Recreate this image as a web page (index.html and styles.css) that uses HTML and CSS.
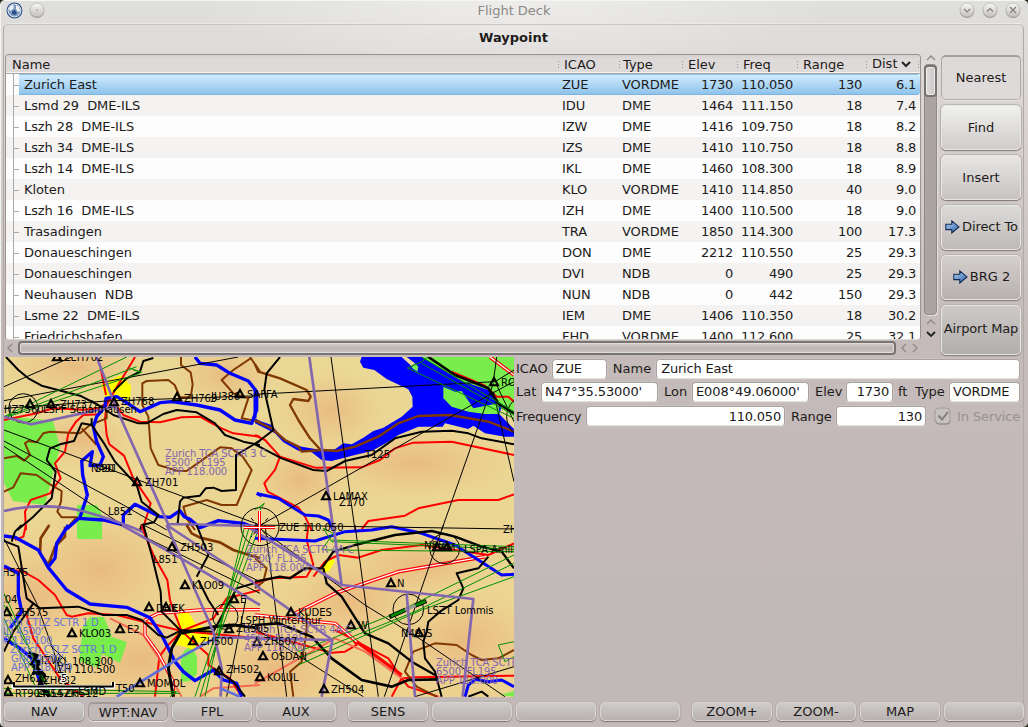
FILE: index.html
```html
<!DOCTYPE html>
<html lang="en">
<head>
<meta charset="utf-8">
<title>Flight Deck</title>
<link rel="stylesheet" href="styles.css">
</head>
<body>
<div class="window">
  <header class="titlebar">
    <div class="tb-left">
      <svg width="17" height="17" viewBox="0 0 17 17"><circle cx="8.500" cy="8.500" r="7.400" fill="#7f9ac0" stroke="#34578c" stroke-width="1.200"/><circle cx="8.500" cy="8.500" r="6.400" fill="none" stroke="#dbe5ef" stroke-width="1"/><path d="M3 6l3-3 2 1-1 3-3 2zM10 3l3 2 1 4-2 1-2-3z" fill="#eef3f4"/><path d="M6 9l3-1 2 3-2 2-3-1z" fill="#28518b"/></svg>
      <svg width="16" height="17" viewBox="0 0 16 17"><use href="#round"/><circle cx="8" cy="8" r=".8" fill="#888"/></svg>
    </div>
    <span class="tb-title">Flight Deck</span>
    <div class="tb-right">
      <svg width="16" height="17" viewBox="0 0 16 17"><defs><linearGradient id="rg" x2="0" y2="1"><stop stop-color="#f8f8f7"/><stop offset="1" stop-color="#c3c0be"/></linearGradient><g id="round"><circle cx="8" cy="8.800" r="7.200" fill="#9b9896"/><circle cx="8" cy="8" r="7" fill="url(#rg)" stroke="#b3b0ae" stroke-width=".7"/></g></defs><use href="#round"/><path d="M5 7l3 3 3-3" class="gl"/></svg>
      <svg width="16" height="17" viewBox="0 0 16 17"><use href="#round"/><path d="M5 9.500l3-3 3 3" class="gl"/></svg>
      <svg width="16" height="17" viewBox="0 0 16 17"><use href="#round"/><path d="M5 5l6 6M11 5l-6 6" class="gl"/></svg>
    </div>
  </header>
  <main class="frame">
    <h1>Waypoint</h1>
    <section class="upper">
      <div class="list">
        <div class="toprow">
          <div class="table">
            <div class="row head"><span>Name</span><span>ICAO</span><span>Type</span><span>Elev</span><span>Freq</span><span>Range</span><span>Dist<svg width="10" height="7" viewBox="0 0 10 7"><path d="M1 1l4 4 4-4" fill="none" stroke="#222" stroke-width="2"/></svg></span></div>
            <div class="rows">
            <div class="row sel"><span>Zurich East</span><span>ZUE</span><span>VORDME</span><span>1730</span><span>110.050</span><span>130</span><span>6.1</span></div>
            <div class="row"><span>Lsmd 29&nbsp; DME-ILS</span><span>IDU</span><span>DME</span><span>1464</span><span>111.150</span><span>18</span><span>7.4</span></div>
            <div class="row"><span>Lszh 28&nbsp; DME-ILS</span><span>IZW</span><span>DME</span><span>1416</span><span>109.750</span><span>18</span><span>8.2</span></div>
            <div class="row"><span>Lszh 34&nbsp; DME-ILS</span><span>IZS</span><span>DME</span><span>1410</span><span>110.750</span><span>18</span><span>8.8</span></div>
            <div class="row"><span>Lszh 14&nbsp; DME-ILS</span><span>IKL</span><span>DME</span><span>1460</span><span>108.300</span><span>18</span><span>8.9</span></div>
            <div class="row"><span>Kloten</span><span>KLO</span><span>VORDME</span><span>1410</span><span>114.850</span><span>40</span><span>9.0</span></div>
            <div class="row"><span>Lszh 16&nbsp; DME-ILS</span><span>IZH</span><span>DME</span><span>1400</span><span>110.500</span><span>18</span><span>9.0</span></div>
            <div class="row"><span>Trasadingen</span><span>TRA</span><span>VORDME</span><span>1850</span><span>114.300</span><span>100</span><span>17.3</span></div>
            <div class="row"><span>Donaueschingen</span><span>DON</span><span>DME</span><span>2212</span><span>110.550</span><span>25</span><span>29.3</span></div>
            <div class="row"><span>Donaueschingen</span><span>DVI</span><span>NDB</span><span>0</span><span>490</span><span>25</span><span>29.3</span></div>
            <div class="row"><span>Neuhausen&nbsp; NDB</span><span>NUN</span><span>NDB</span><span>0</span><span>442</span><span>150</span><span>29.3</span></div>
            <div class="row"><span>Lsme 22&nbsp; DME-ILS</span><span>IEM</span><span>DME</span><span>1406</span><span>110.350</span><span>18</span><span>30.2</span></div>
            <div class="row"><span>Friedrichshafen</span><span>FHD</span><span>VORDME</span><span>1400</span><span>112.600</span><span>25</span><span>32.1</span></div>
            </div>
          </div>
          <div class="vscroll">
            <svg width="10" height="7" viewBox="0 0 10 7"><path d="M1 6l4-4 4 4" class="sa"/></svg>
            <div class="vtrack"><div class="vthumb"></div></div>
            <svg width="10" height="7" viewBox="0 0 10 7"><path d="M1 6l4-4 4 4" class="sa"/></svg>
            <svg width="10" height="7" viewBox="0 0 10 7"><path d="M1 1l4 4 4-4" class="sa dark"/></svg>
          </div>
        </div>
        <div class="hscroll">
          <svg width="7" height="10" viewBox="0 0 7 10"><path d="M6 1l-4 4 4 4" class="sa"/></svg>
          <div class="hthumb"></div>
          <svg width="7" height="10" viewBox="0 0 7 10"><path d="M6 1l-4 4 4 4" class="sa"/></svg>
          <svg width="7" height="10" viewBox="0 0 7 10"><path d="M1 1l4 4-4 4" class="sa"/></svg>
        </div>
      </div>
      <nav class="side">
        <button class="btn down">Nearest</button>
        <button class="btn">Find</button>
        <button class="btn s3">Insert</button>
        <button class="btn s4"><svg width="15" height="14" viewBox="0 0 15 14"><defs><linearGradient id="ar" y2="1"><stop stop-color="#b7d2f4"/><stop offset="1" stop-color="#285ea6"/></linearGradient><path id="arrow" d="M.8 4.300h6V.9L14 6.900 6.800 13V9.600h-6z" fill="url(#ar)" stroke="#142c55" stroke-width="1.100"/></defs><use href="#arrow"/></svg><span class="w1">Direct To</span></button>
        <button class="btn s5"><svg width="15" height="14" viewBox="0 0 15 14"><use href="#arrow"/></svg><span>BRG 2</span></button>
        <button class="btn s6">Airport Map</button>
      </nav>
    </section>
    <section class="lower">
      <svg class="map" width="510" height="340" viewBox="4 357 510 340">
        <defs>
          <radialGradient id="hill"><stop stop-color="#e8ac76" stop-opacity=".65"/><stop offset=".5" stop-color="#e9b880" stop-opacity=".38"/><stop offset="1" stop-color="#ebca8a" stop-opacity="0"/></radialGradient>
          <linearGradient id="land" x2="0" y2="1"><stop stop-color="#ead896"/><stop offset="1" stop-color="#edd28f"/></linearGradient>
          <path id="tri" d="M0-4L4 3.200H-4z" fill="none" stroke="#000" stroke-width="2.100"/>
        </defs>
        <rect x="4" y="357" width="510" height="340" fill="url(#land)"/>
        <g fill="url(#hill)">
          <ellipse cx="75" cy="367" rx="80" ry="34"/><ellipse cx="225" cy="375" rx="60" ry="35"/><ellipse cx="330" cy="410" rx="60" ry="42"/><ellipse cx="415" cy="463" rx="105" ry="38"/><ellipse cx="300" cy="480" rx="50" ry="38"/><ellipse cx="100" cy="570" rx="85" ry="65"/><ellipse cx="465" cy="640" rx="80" ry="50"/><ellipse cx="275" cy="670" rx="75" ry="55"/><ellipse cx="30" cy="600" rx="65" ry="60"/><ellipse cx="350" cy="600" rx="75" ry="45"/><ellipse cx="140" cy="660" rx="80" ry="50"/><ellipse cx="80" cy="440" rx="60" ry="30"/><ellipse cx="420" cy="565" rx="80" ry="35"/>
        </g>
        <!-- forests, towns and the lake -->
        <g stroke="none">
          <path d="M4 421l13-4 36 4 7 26-15 58-32-4-9-18zM77 505h20l5 10v24H77z" fill="#78ed4c"/>
          <path d="M83 626l7-9h14l8 20 15 5-7 21-18-9-3 14-20-7z" fill="#78ed4c"/><path d="M181 657q8-18 16 0v17q-6 10-16 7z" fill="#78ed4c"/>
          <g transform="translate(255 355) scale(.33333)">
            <path d="M500 6H777V185L740 160 690 120z" fill="#78ed4c"/>
            <path d="M320 6L315 20 325 38 358 45 395 72 460 103 472 125 473 155 440 185 385 218 355 228 325 248 290 268 265 265 240 283 200 285 140 275 100 262 75 240 50 210 15 198 0 190V205L60 235 85 262 130 287 170 292 200 315 230 318 300 300 350 288 400 260 430 240 490 215H563L570 205 640 222 655 212 690 235 750 245H777V222L750 195 733 177 740 155 700 105 620 78 500 6H455L480 25 470 34 440 6z" fill="#00f"/>
            <path d="M565 95L600 110 620 108 655 160 730 145 733 177 690 177 640 170 590 155 565 130zM470 38L480 25 490 35 487 50z" fill="#78ed4c"/>
          </g>
          <path d="M101 384l20-9 10 11-1 14-23 2zM179 612l8-2 8 13 14 7v10l-12 3-3 7-12-4-8-2zM322 566l8-8 5 3-6 10-7 2z" fill="#ff0"/>
        </g>
        <g fill="none" stroke-linejoin="round">
          <!-- upper left -->
          <g transform="translate(0 355) scale(.33333)">
            <g stroke="#ff0000" stroke-width="6">
              <path d="M405 6L385 40 345 105 320 150 315 190 320 240 328 268 372 302 400 370 452 445 432 510 425 530M302 40L318 120"/><path d="M12 195L110 175 160 160 250 164 300 160 330 130 370 180 420 200 480 202 545 187 600 185 630 202 665 220 700 235 780 245"/>
              <path d="M300 178L250 180 228 200 205 235 195 290 165 325 182 370 150 415 92 435 75 470 78 525"/>
            </g>
            <g stroke="#803800" stroke-width="6">
              <path d="M543 6V30L572 52 578 88 572 127 540 127 524 90 505 75 440 78 427 85V150L445 185 452 280 475 330 530 347 560 348 600 320 660 277 695 280 728 305 755 345 710 450 665 450 620 435 550 455 560 490 585 525"/>
              <path d="M755 8L700 45 665 75 700 115 745 130 725 190 780 200M750 6L780 50M12 310L50 303 72 317 90 300 75 265 85 258 110 262 130 235 150 230 240 235 270 210 320 190V165"/><path d="M12 410L40 397 62 355 110 360 150 388 185 408 183 440 172 470 185 487 230 487 195 525M290 270L245 220"/>
            </g>
            <g stroke="#0000ff" stroke-width="10">
              <path d="M585 6L600 25 650 30 690 55 745 78 770 110V165L755 205 705 195 660 165 590 150 515 140 480 143 420 170 375 140 350 125 318 130 315 155 290 185 280 215 290 260 310 305 300 330 270 332 277 290 245 318 248 360 262 420 240 487 200 522"/>
              <path d="M235 490L310 495 370 510V480L405 448 480 485 510 487 540 467 553 485 570 493 600 518 655 497 730 505 780 525M770 415L785 422"/>
            </g>
            <g stroke="#000" stroke-width="6">
              <path d="M18 6L55 45 85 70 125 92 240 122 295 150 340 180 415 205H440L490 177 530 165 590 172 645 205 675 240 730 260 780 270"/>
              <path d="M460 9L430 18 420 50 380 70 340 110M275 190V210L310 262 345 320 410 390 425 440 475 480 462 502 425 510 420 525M275 210L245 205 222 258 180 268 150 280 140 315 167 350 155 430 100 485 52 525M780 257L708 300V405L665 408 640 398 617 400 600 422 550 428 540 440 533 505"/>
            </g>
            <g stroke="#000" stroke-width="3"><path d="M12 95L215 6M12 137L715 6M12 160L320 138 780 122M12 225L415 375 780 510M12 258L370 450 500 525M12 274L390 525"/><circle cx="70" cy="160" r="44"/></g>
            <g stroke="#008f00" stroke-width="3"><path d="M12 185L380 6M12 187L410 35M12 189L420 55M385 38L425 52 400 45"/></g>
            <g stroke="#8366b0" stroke-width="8"><path d="M290 6L345 150 510 520M12 185L92 208 350 153M12 468Q150 435 290 480T440 540M500 507L780 513"/></g>
          </g>
          <!-- upper right -->
          <g transform="translate(255 355) scale(.33333)">
            <g stroke="#ff0000" stroke-width="6"><path d="M0 240L30 255 75 305 60 345 28 385 38 410 130 458 150 485 170 525M75 305L180 338 320 337 375 315 420 280 475 263 590 260 777 300M320 522L340 498 450 482 490 460 610 435 730 435 777 418"/><path d="M590 50L690 92 725 125H760L777 140"/><path d="M705 6L777 60" stroke-width="11"/><path d="M705 6L777 60" stroke="#fff" stroke-width="4"/></g>
            <g stroke="#803800" stroke-width="7"><path d="M0 28L10 50 75 70 155 105 167 125 160 138 115 132 105 150 130 195 165 250 195 283M0 197L50 220 90 255 130 275 140 290 200 285 245 288 300 275 370 245 430 205 490 183 585 180 700 200 777 230"/></g>
            <path d="M10 417L70 430 110 455 150 480 190 483 220 495 235 525M0 100V190" stroke="#00f" stroke-width="9"/>
            <g stroke="#000" stroke-width="6"><path d="M75 6L35 55 28 105 55 225 0 268 80 310 175 345 215 348 270 318 350 300 420 250 500 230 590 227 640 235 680 250 777 268"/><path d="M520 6L600 60 700 100 730 145 777 175" stroke-width="8"/></g>
            <g stroke="#000" stroke-width="3"><path d="M0 118L720 80 777 45M0 520L720 110 777 80M715 85L560 525M725 90L777 200M715 110L777 380M228 6L300 525M725 6L715 80"/><circle cx="820" cy="185" r="65"/><circle cx="15" cy="515" r="57"/></g>
            <g stroke="#008f00" stroke-width="3"><path d="M500 6L777 170M500 25L777 180M455 38L777 190M460 38L500 20 520 6M0 465L28 445 15 465"/></g>
            <path d="M163 6L235 525" stroke="#8366b0" stroke-width="8"/>
          </g>
          <!-- lower left -->
          <g transform="translate(0 525) scale(.33333)">
            <g stroke="#ff0000" stroke-width="6"><path d="M78 0L70 35 45 45M12 130L70 140 115 165 165 210 200 270 215 275 265 265 350 270 410 285 470 300 545 318M425 0L435 30 460 90 502 165 510 225 520 255 545 318 640 280 680 220 780 195M80 270L100 340 140 400 180 460 250 515M545 318L500 365 478 395 465 515"/><path d="M330 280L430 330 490 420 545 515M600 515L640 490 780 480" stroke="#f36b55"/><path d="M535 310L625 390V420L690 460 725 515"/><path d="M780 254L600 255 475 265 435 285V330L475 385 520 470V515" stroke-width="10"/><path d="M780 254L600 255 475 265 435 285V330L475 385 520 470V515" stroke="#fff" stroke-width="4"/><path d="M545 318L780 340"/></g>
            <g stroke="#803800" stroke-width="8"><path d="M195 5L195 35 165 65 145 120M148 0L122 40 120 85 145 120M560 0L575 25 600 38 660 52 700 75 780 100"/></g>
            <g stroke="#0000ff" stroke-width="10"><path d="M12 33L45 37 115 75 145 128 200 195 270 237 380 247 450 278 485 330 525 410 550 440 585 467 640 435 670 465 710 475 725 515M205 0L170 55 165 100 145 125M12 123L55 145V210L65 260 30 310M12 340L60 370 95 400 120 470 150 515"/></g>
            <g stroke="#000" stroke-width="6"><path d="M12 48L55 65 80 220 120 250 235 245 310 270H380L425 285 475 330 500 338 540 318M65 0L45 20 35 50M430 0L455 90 482 200 485 260 540 315 640 320 670 265 710 190 780 170"/><path d="M100 235L40 320 12 380M595 165L625 225 655 270M590 155L625 90 590 0M640 430L700 470 735 515"/><path d="M545 318L515 370 505 430 520 515M545 325L640 305 700 300 780 310" stroke-width="9"/><path d="M85 385L115 410 105 440M85 385L115 395M100 420L130 450 120 480 150 515" stroke-width="14"/></g>
            <g stroke="#000" stroke-width="3"><path d="M12 40L110 235 200 490M360 0L780 205M430 0L780 170M740 210L680 515M150 360L200 410"/><circle cx="676" cy="275" r="38"/></g>
            <g stroke="#008f00" stroke-width="3"><path d="M12 205L155 515M12 280L120 515M12 320L140 480M12 490L530 500 510 515M12 505H540M12 240L80 360M765 0L640 350 585 515M780 0L645 365 600 515M750 0L670 260 615 515M735 0L640 400"/></g>
            <g stroke="#8366b0" stroke-width="8"><path d="M365 0L560 110 780 240M500 0L640 320 665 430 662 515M500 0L780 185M645 338H780"/><path d="M350 515L545 395 645 340M660 490L720 515" stroke="#6070d8"/></g>
          </g>
          <!-- lower right -->
          <g transform="translate(255 525) scale(.33333)">
            <g stroke="#ff0000" stroke-width="6"><path d="M160 0L155 45 175 120 155 155 50 160 0 175M175 155L210 110 250 90 310 98 380 75 500 60 600 75 700 90 777 55M0 320L110 350 230 383 270 380 305 360 290 340 240 315M305 350L400 400 440 460 460 485 550 515M445 460L480 457 777 452M440 460L410 515"/><path d="M0 475L240 340 330 380 440 460" stroke="#f36b55"/><path d="M120 265L240 205 430 140 690 95" stroke-width="11"/><path d="M120 265L240 205 430 140 690 95" stroke="#fff" stroke-width="4"/><path d="M0 270L240 295 305 350 440 450" stroke-width="10"/><path d="M0 270L240 295 305 350" stroke="#fff" stroke-width="4"/></g>
            <g stroke="#803800" stroke-width="6"><path d="M155 265L155 320 140 410 105 440 115 515M545 515L485 485 450 440 475 380 540 355 605 360 650 390 680 405 730 400 777 375M0 100L35 130 25 170 0 190"/></g>
            <path d="M0 40L180 48 270 20 350 15 410 5 500 25 600 60 740 150 777 148" stroke="#00f" stroke-width="9"/><path d="M630 515L640 480 660 463 700 470 740 465 777 485" stroke="#00f" stroke-width="9"/><path d="M735 510L777 498V515z" fill="#78ed4c"/>
            <g stroke="#000" stroke-width="7"><path d="M0 170L75 155 105 160 150 130H200L235 80 300 60 420 30 530 18 600 35 680 65 740 80 777 130M205 130L215 175 260 215 330 325 400 355 470 410 540 450"/><path d="M0 300L70 295 170 335 230 400 320 465 410 485 460 465 550 463" stroke-width="8"/><path d="M515 320L505 350 510 400 540 440 560 515M515 320L520 290 555 260 610 225 625 190 605 145 670 130 700 95M640 515L680 500 700 515" stroke-width="6"/></g>
            <g stroke="#000" stroke-width="3"><path d="M0 0L777 12M30 0L95 515M300 0L370 515M565 0L388 515M0 0L330 240 500 345 750 515M0 310L325 515M480 515L777 425"/><circle cx="460" cy="253" r="46"/><circle cx="569" cy="71" r="45"/></g>
            <g stroke="#008f00" stroke-width="3"><path d="M205 10L230 50 777 73M230 45L777 65M210 75L777 80M205 10L235 25 200 75M130 380L410 270 777 90M130 400L480 260 777 115M130 420L500 255 777 155M130 380L110 350M777 350L730 360 750 410 777 395"/><path d="M403 276L452 254M480 242L514 228" stroke="#000" stroke-width="13"/><path d="M408 274L450 255M483 241L511 229" stroke="#008f00" stroke-width="8"/><path d="M450 255L482 241" stroke="#999" stroke-width="9"/></g>
            <g stroke="#8366b0" stroke-width="8"><path d="M235 0L260 180 655 222 623 515M455 205L480 515M0 180L232 345 200 515M0 340L232 345M-30 0L260 180"/></g>
          </g>
          <path d="M251 518l17 19M268 518l-17 19M250 527h19" stroke="#000" stroke-dasharray="4 2"/><path d="M259.500 511v31M244 527.500h31" stroke="#f00" stroke-width="3"/><path d="M259.500 511v31M244 527.500h31" stroke="#fff"/>
          <path d="M13 682v5h100v-5" stroke="#fff" stroke-width="4"/><path d="M14 682v4.500h99v-4.500" stroke="#000" stroke-width="2"/>
        </g>
        <g>
          <use href="#tri" x="57" y="357"/><use href="#tri" x="30" y="404"/><use href="#tri" x="51" y="404"/><use href="#tri" x="114" y="402"/><use href="#tri" x="177" y="397"/><use href="#tri" x="240" y="394"/><use href="#tri" x="137" y="482"/><use href="#tri" x="494" y="382"/><use href="#tri" x="326" y="496"/><use href="#tri" x="172" y="547"/><use href="#tri" x="185" y="585"/><use href="#tri" x="149" y="607"/><use href="#tri" x="166" y="607"/><use href="#tri" x="72" y="633"/><use href="#tri" x="120" y="629"/><use href="#tri" x="193" y="641"/><use href="#tri" x="229" y="629"/><use href="#tri" x="234" y="599"/><use href="#tri" x="291" y="612"/><use href="#tri" x="351" y="625"/><use href="#tri" x="391" y="583"/><use href="#tri" x="263" y="656"/><use href="#tri" x="260" y="677"/><use href="#tri" x="324" y="689"/><use href="#tri" x="140" y="683"/><use href="#tri" x="219" y="671"/><use href="#tri" x="257" y="642"/><use href="#tri" x="419" y="633"/><use href="#tri" x="437" y="547"/><use href="#tri" x="447" y="547"/><use href="#tri" x="7" y="612"/><use href="#tri" x="8" y="692"/><use href="#tri" x="35" y="661"/><use href="#tri" x="8" y="680"/><use href="#tri" x="37" y="670"/>
        </g>
        <g class="lbl air">
          <text x="165" y="457">Zurich TCA SCTR 3 C</text><text x="165" y="466">5500' FL195</text><text x="165" y="475">APP 118.000</text>
          <text x="246" y="553">Zurich TCA SCTR 4A C</text><text x="246" y="562">4500' FL195</text><text x="246" y="571">APP 118.000</text>
          <text x="244" y="633">Zurich TCA SCTR 4A C</text><text x="244" y="642">4500' FL195</text><text x="244" y="651">APP 118.000</text>
          <text x="436" y="666">Zurich TCA SCTR 5</text><text x="436" y="675">6500' FL195</text><text x="436" y="684">APP 118.000</text>
        </g>
        <g class="lbl">
          <text x="57" y="361">ZZEH702</text><text x="60" y="408">ZH737</text><text x="4" y="413">HZ7360</text><text x="43" y="413">LSPF Schaffhausen</text><text x="121" y="405">ZH768</text><text x="184" y="402">ZH769</text><text x="211" y="400">JU386</text><text x="247" y="398">SAFFA</text><text x="91" y="472">N491</text><text x="95" y="472">S90</text><text x="145" y="486">ZH701</text><text x="108" y="515">L851</text><text x="501" y="386">ROM</text><text x="365" y="458">T125</text><text x="333" y="500">LAMAX</text><text x="339" y="506">Z170</text><text x="279" y="531">ZUE 110.050</text><text x="503" y="533">ZH</text><text x="180" y="551">ZH503</text><text x="153" y="563">L851</text><text x="192" y="589">KLO09</text><text x="156" y="612">DHK</text><text x="172" y="612">EK</text><text x="2" y="576">H575</text><text x="-2" y="603">Z04</text><text x="15" y="616">ZH575</text><text x="79" y="637">KLO03</text><text x="127" y="633">E2</text><text x="200" y="645">ZH500</text><text x="240" y="603">E</text><text x="240" y="624">LSPH Winterthur</text><text x="236" y="632">ZH505</text><text x="298" y="616">KUDES</text><text x="358" y="629">W</text><text x="397" y="587">N</text><text x="427" y="614">LSZT Lommis</text><text x="401" y="637">N491</text><text x="426" y="637">S</text><text x="271" y="660">OSDAN</text><text x="264" y="645">ZH507</text><text x="267" y="681">KOLUL</text><text x="331" y="693">ZH504</text><text x="226" y="673">ZH502</text><text x="147" y="687">MOMOL</text><text x="424" y="549">N851</text><text x="440" y="551">AM</text><text x="464" y="553">LSPA Amlikon</text><text x="41" y="664">IZW</text><text x="54" y="665">IKL 108.300</text><text x="54" y="673">IZH 110.500</text><text x="15" y="682">ZH621</text><text x="43" y="684">ZH632</text><text x="15" y="697">RT904</text><text x="36" y="697">ZH547</text><text x="52" y="697">LSZK</text><text x="65" y="697">ZH512</text><text x="78" y="695">LSMD</text><text x="116" y="692">T50</text><text x="61" y="682" class="scale">5</text>
        </g>
        <g class="lbl ctlz"><text x="-8" y="626">Zurich CTLZ SCTR 1 D</text><text x="-9" y="635">GND 4500'</text><text x="-9" y="644">APP 118.100</text><text x="10" y="653">Zurich CTLZ SCTR 1 D</text><text x="11" y="662">GND 4500'</text><text x="11" y="671">APP 118.100</text></g>
      </svg>
      <form class="form">
        <div class="line l1"><label>ICAO</label><input class="icao" value="ZUE"><label>Name</label><input class="name" value="Zurich East"></div>
        <div class="line l2"><label class="lat">Lat</label><input class="coord" value="N47°35.53000'"><label class="lon">Lon</label><input class="coord" value="E008°49.06000'"><label class="elev">Elev</label><input class="num elevin" value="1730"><label class="ft">ft</label><label class="ty">Type</label><input class="typein" value="VORDME"></div>
        <div class="line l3"><label class="fr">Frequency</label><input class="num freqin" value="110.050"><label class="ra">Range</label><input class="num rangein" value="130"><svg width="18" height="18" viewBox="0 0 18 18"><rect x="1" y="1" width="15" height="16" rx="4" fill="#c5c1be" stroke="#a29b99"/><path d="M2 14q0 3 3 3h8q3 0 3-3" fill="none" stroke="#8f8987"/><path d="M4.500 8.500l3.500 4L14 5" fill="none" stroke="#827d7b" stroke-width="2"/></svg><label class="off">In Service</label></div>
      </form>
    </section>
    <footer class="keys">
      <button class="btn">NAV</button><button class="btn down">WPT:NAV</button><button class="btn">FPL</button><button class="btn">AUX</button>
      <button class="btn gap">SENS</button><button class="btn"></button><button class="btn"></button><button class="btn"></button>
      <button class="btn gap">ZOOM+</button><button class="btn">ZOOM-</button><button class="btn">MAP</button><button class="btn"></button>
    </footer>
  </main>
</div>
</body>
</html>
```
FILE: styles.css
```css
* { box-sizing: border-box; }
body { margin: 0; background: #2b2a20; font: 13px/21px "DejaVu Sans", sans-serif; color: #1d1b1a; overflow: hidden; }
svg { display: block; flex: none; }
.window { width: 1028px; height: 727px; border-radius: 5px; border-left: 1px solid #f4f3f2; padding: 0 4px 0 3px; border-top: 1px solid #f5f5f3; background: radial-gradient(ellipse 320px 70px at 513px 0, #eeedeb, #eeedeb00), linear-gradient(#dfdfdd, #dedad9 60px, #c4bbba 330px, #c0b8b6 690px, #c4baba); overflow: hidden; }
.titlebar { height: 23px; display: flex; justify-content: space-between; padding: 1px 2px 0; color: #8b8886; }
.tb-left, .tb-right { display: flex; gap: 7px; width: 70px; }
.tb-left { gap: 6px; }
.tb-title { line-height: 18px; padding-left: 1px; }
.tb-right { justify-content: flex-end; margin-right: 1px; }
.gl { fill: none; stroke: #827f7d; stroke-width: 1.2; }
.frame { width: 1021px; margin-left: -1px; height: 703px; border: 1px solid #b0a9a7; border-top-color: #c9c5c4; border-bottom: 0; border-radius: 5px 5px 0 0; box-shadow: 0 -1px #ebe9e8; }
h1 { margin: 0; font-size: 13px; height: 29px; line-height: 25px; text-align: center; }
.upper { display: flex; height: 303px; }
.list { width: 937px; flex: none; }
.toprow { display: flex; }
.table { width: 916px; height: 286px; border: 1px solid #999391; border-bottom-color: #d9d6d5; border-radius: 4px; overflow: hidden; background: #ddd9d8; margin-left: 1px; }
.row { display: grid; grid-template-columns: 556px 60px 62px 49px 60px 69px 58px; height: 21px; background: #fdfdfd; }
.row:nth-child(even) { background: #f4f3f2; }
.rows .row > span { white-space: pre; letter-spacing: -.1px; }
.rows .row > span:nth-child(n+4) { text-align: right; letter-spacing: -.25px; }
.rows .row > span:first-child { display: flex; letter-spacing: -.08px; }
.rows .row > span:first-child::before { content: ""; width: 6px; height: 11px; margin: 0 5px 0 7px; border-bottom: 1px solid #aaa; }
.rows { position: relative; background: #fdfdfd; }
.rows::before { content: ""; position: absolute; left: 7px; top: 0; width: 1px; height: 266px; background: #aaa; z-index: 1; }
.rows .row > span:nth-child(7) { padding-right: 4px; }
.row.sel { background: linear-gradient(90deg, #fdfdfd 13px, transparent 13px), linear-gradient(#8fc4e8 1px, #d0ebff 1px, #8fc3eb 20px, #7db5df 20px); border-radius: 0 3px 3px 0; }
.row.head { display: flex; height: 19px; line-height: 20px; padding-left: 6px; background: linear-gradient(#d4d0cf, #dedad9 4px); border-bottom: 1px solid #a9a4a2; box-shadow: inset 0 -1px #f5f4f4; }
.head span { flex: none; background: linear-gradient(#9b9593, #9b9593) right 3px top 6px / 1px 1px no-repeat, linear-gradient(#9b9593, #9b9593) right 3px top 9px / 1px 1px no-repeat, linear-gradient(#9b9593, #9b9593) right 3px top 12px / 1px 1px no-repeat; width: 550px; }
.head span:nth-child(2) { width: 61px; padding-left: 2px; }
.head span:nth-child(3) { width: 63px; }
.head span:nth-child(4) { width: 55px; padding-left: 2px; }
.head span:nth-child(5) { width: 60px; padding-left: 2px; }
.head span:nth-child(6) { width: 69px; padding-left: 2px; }
.head span:nth-child(7) { width: 52px; padding-left: 2px; display: flex; align-items: center; gap: 3px; }
.vscroll { width: 18px; padding: 0 0 0 1px; display: flex; flex-direction: column; align-items: center; }
.sa { fill: none; stroke: #918b89; stroke-width: 1.4; }
.sa.dark { stroke: #222; stroke-width: 1.8; }
.vscroll svg + svg { margin-top: 6px; }
.vtrack { width: 13px; height: 251px; margin: 3px 0 3px; border-radius: 4px; background: #aca4a2; border: 1px solid #918a88; box-shadow: 1px 1px #e2dedd; }
.vthumb { width: 13px; height: 32px; margin: 0 0 0 -1px; border: 2px solid #777371; border-radius: 4px; background: linear-gradient(90deg, #ddd, #cac6c5); box-shadow: inset 0 0 0 1px #eee; }
.hscroll { height: 16px; display: flex; align-items: center; padding: 0 1px 0 2px; }
.hthumb { width: 878px; height: 14px; margin: 0 4px 0 5px; border: 2px solid #787371; border-radius: 4px; background: linear-gradient(#d5d2d0, #bbb5b3 50%, #c9c5c3); box-shadow: inset 0 0 0 1px #dedbd9; }
.hscroll svg:last-child { margin-left: 5px; }
.side { display: flex; flex-direction: column; gap: 5px; padding: 1px 0 0; }
.btn { font: 13px "DejaVu Sans", sans-serif; color: #1d1b1a; width: 80px; height: 45px; padding: 0 0 1px; border: 1px solid #e9e7e6; border-radius: 5px; background: linear-gradient(#f0f0ef, #cfccca); box-shadow: 0 1px 1px #817b79, 0 0 1px 1px #bab4b1; display: flex; align-items: center; justify-content: center; white-space: nowrap; flex: none; }
.btn.down { background: #dedad9; border: 1px solid #b0aaa8; border-top: 2px solid #a49e9c; box-shadow: 0 1px #e7e4e3; }
.side .down { padding-bottom: 2px; }
.side .w1 { letter-spacing: -.1px; }
.s3 { background: linear-gradient(#e7e6e5, #c7c3c1); }
.s4 { background: linear-gradient(#dcdad9, #bebab7); padding: 0 0 2px 1px; }
.s5 { background: linear-gradient(#d3cfcd, #b8b1af); padding: 0 0 2px 1px; }
.s6 { height: 50px; background: linear-gradient(#ccc9c6, #b2aeab); letter-spacing: -.15px; padding-bottom: 3px; }
.btn svg { margin-right: 2px; }
.lower { display: flex; height: 341px; }
.lbl { font: 10px "DejaVu Sans", sans-serif; fill: #000; letter-spacing: -.05px; }
.scale { stroke: #fff; stroke-width: 2px; paint-order: stroke; }
.air { fill: #8366b0; letter-spacing: -.12px; }
.ctlz { fill: #6674d6; letter-spacing: -.2px; }
.form { padding: 0 0 0 2px; width: 507px; }
.line { display: flex; align-items: center; height: 23px; white-space: nowrap; }
.l3 { height: 26px; }
.form input { font: 13px "DejaVu Sans", sans-serif; color: #1b1918; height: 20px; border: 1px solid #aaa2a0; border-bottom-color: #e2dedd; border-radius: 4px; background: #fff; padding: 0 3px; margin: 0; box-shadow: 0 0 0 .5px #d2cccb; min-width: 0; letter-spacing: -.2px; }
.form input.num { text-align: right; }
.form .icao { width: 55px; margin: 0 6px 0 4px; }
.form .name { width: 364px; margin-left: 5px; padding-left: 4px; }
.form .coord { width: 117px; letter-spacing: -.1px; }
.lat { width: 25px; }
.lon { width: 34px; padding-left: 6px; }
.elev { width: 37px; padding-left: 6px; }
.form .elevin { width: 47px; }
.ft { width: 22px; padding-left: 5px; }
.ty { width: 34px; }
.form .typein { width: 71px; }
.fr { width: 70px; letter-spacing: -.2px; }
.form .freqin { width: 199px; }
.ra { width: 51px; padding-left: 6px; letter-spacing: -.1px; }
.form .rangein { width: 90px; margin-right: 8px; }
.off { color: #989290; padding-left: 5px; letter-spacing: -.1px; }
.keys { display: flex; gap: 4px; padding-top: 4px; }
.keys .btn { height: 19px; background: linear-gradient(#cfccca, #b7b1af); border-color: #d7d4d2; padding: 0; }
.keys .btn.down { background: #c0b9b7; border-color: #a19a98; }
.keys .gap { margin-left: 8px; }
```
